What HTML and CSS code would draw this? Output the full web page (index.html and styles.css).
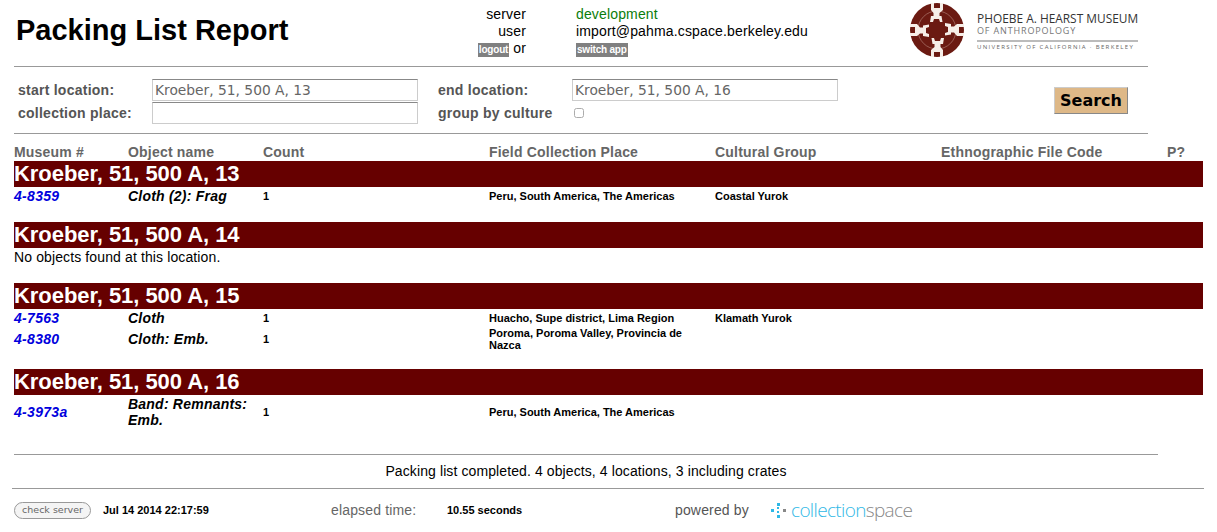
FILE: index.html
```html
<!DOCTYPE html>
<html lang="en">
<head>
  <meta charset="UTF-8">
  <meta name="viewport" content="width=device-width, initial-scale=1.0">
  <title>Packing List Report</title>
  <link rel="stylesheet" href="styles.css">
</head>
<body>
  <div class="top">
    <h1>Packing List Report</h1>
    <div class="session">
      <span class="key">server</span><span class="green">development</span>
      <span class="key">user</span><span>import@pahma.cspace.berkeley.edu</span>
      <span class="key"><a class="tag">logout</a> or</span><span><a class="tag">switch app</a></span>
    </div>
    <div class="logo">
      <svg width="56" height="56" viewBox="0 0 56 56">
        <circle cx="28" cy="28" r="27" fill="#6b1a12"/>
        <circle cx="28" cy="28" r="19" fill="none" stroke="#b98a80" stroke-width="0.6"/>
        <g id="fig">
          <path fill="#f6eee8" d="M22 1h3v5h6V1h3v7l-3.500 3v3h2l1 6h-2.500l-1-3h-5l-1 3H21l1-6h2.500v-3L22 8z"/>
        </g>
        <use href="#fig" transform="rotate(90 28 28)"/>
        <use href="#fig" transform="rotate(180 28 28)"/>
        <use href="#fig" transform="rotate(270 28 28)"/>
      </svg>
      <div class="logo-text">
        <div class="l1">PHOEBE A. HEARST MUSEUM</div>
        <div class="l2">OF ANTHROPOLOGY</div>
        <div class="l3">UNIVERSITY OF CALIFORNIA · BERKELEY</div>
      </div>
    </div>
  </div>
  <hr class="rule rule-top">

  <div class="search">
    <label>start location:</label>
    <input class="field" value="Kroeber, 51, 500 A, 13">
    <label>end location:</label>
    <input class="field" value="Kroeber, 51, 500 A, 16">
    <label>collection place:</label>
    <input class="field">
    <label>group by culture</label>
    <div><input class="check" type="checkbox"></div>
    <button class="go">Search</button>
  </div>
  <hr class="rule rule-form">

  <div class="row heads">
    <span>Museum #</span><span>Object name</span><span>Count</span><span>Field Collection Place</span><span>Cultural Group</span><span>Ethnographic File Code</span><span>P?</span>
  </div>

  <h2 class="band">Kroeber, 51, 500 A, 13</h2>
  <div class="row item">
    <a class="num">4-8359</a><i>Cloth (2): Frag</i><b>1</b><b>Peru, South America, The Americas</b><b>Coastal Yurok</b>
  </div>

  <h2 class="band gap-a">Kroeber, 51, 500 A, 14</h2>
  <p class="none">No objects found at this location.</p>

  <h2 class="band gap-b">Kroeber, 51, 500 A, 15</h2>
  <div class="row item">
    <a class="num">4-7563</a><i>Cloth</i><b>1</b><b>Huacho, Supe district, Lima Region</b><b>Klamath Yurok</b>
  </div>
  <div class="row item">
    <a class="num">4-8380</a><i>Cloth: Emb.</i><b>1</b><b>Poroma, Poroma Valley, Provincia de Nazca</b><b></b>
  </div>

  <h2 class="band gap-c">Kroeber, 51, 500 A, 16</h2>
  <div class="row item tall">
    <a class="num">4-3973a</a><i>Band: Remnants: Emb.</i><b>1</b><b>Peru, South America, The Americas</b><b></b>
  </div>

  <hr class="rule rule-end">
  <p class="done">Packing list completed. 4 objects, 4 locations, 3 including crates</p>
  <hr class="rule rule-foot">

  <div class="foot">
    <button class="check-server">check server</button>
    <b class="stamp">Jul 14 2014 22:17:59</b>
    <span class="elapsed">elapsed time:</span>
    <b class="secs">10.55 seconds</b>
    <span class="powered">powered by</span>
    <svg class="cs-dots" width="16" height="16" viewBox="0 0 16 16" fill="#2fb8e6">
      <rect x="0" y="7" width="3" height="3"/><rect x="6" y="1" width="3" height="3"/><rect x="6" y="5" width="2" height="2"/>
      <rect x="6" y="9" width="2" height="2"/><rect x="6" y="13" width="3" height="3"/><rect x="12" y="7" width="3" height="3" fill="#888"/>
    </svg>
    <span class="cs"><span class="cs-blue">collection</span>space</span>
  </div>
</body>
</html>
```

FILE: styles.css
```css
html, body { margin: 0; padding: 0; }
body { font-family: "Liberation Sans", Arial, sans-serif; background: #fff; color: #000; height: 532px; overflow: hidden; }

.top { display: flex; height: 66px; }
h1 { margin: 0; padding: 11px 0 0 16px; width: 430px; font-size: 29px; line-height: 38px; font-weight: bold; }
.session { display: grid; grid-template-columns: 80px auto; column-gap: 50px; margin: 6px 0 0 0; width: 460px; font-size: 14px; line-height: 17px; letter-spacing: 0.15px; align-content: start; }
.key { text-align: right; }
.green { color: #0a7d0a; }
.tag { display: inline-block; background: #808080; color: #fff; font-size: 10px; line-height: 14px; padding: 0 1px; font-weight: bold; letter-spacing: -0.2px; }
.logo { display: flex; margin: 2px 0 0 3px; }
.logo-text { margin-left: 12px; padding-top: 10px; width: 161px; }
.l1 { font-family: "Open Sans", sans-serif; font-size: 11.9px; line-height: 13px; color: #333; white-space: nowrap; }
.l2 { font-family: "Open Sans", sans-serif; font-size: 9px; line-height: 12px; color: #777; letter-spacing: 0.85px; white-space: nowrap; }
.l3 { font-family: "Open Sans", sans-serif; font-size: 6px; line-height: 9px; margin-top: 3px; padding-top: 1px; color: #666; letter-spacing: 1.35px; border-top: 2px solid #bbb; white-space: nowrap; }

.rule { border: 0; border-top: 1px solid #999; margin: 0; height: 1px; }
.rule-top { margin-left: 14px; width: 1134px; }
.rule-form { margin: 9px 0 0 14px; width: 1134px; }

.search { display: grid; grid-template-columns: 134px 286px 134px 286px 1fr; grid-auto-rows: 23px; margin: 10px 0 0 18px; width: 1130px; color: #555; font-size: 14px; font-weight: bold; letter-spacing: 0.25px; align-items: center; }
.search label { line-height: 20px; }
.field { box-sizing: border-box; width: 266px; height: 22px; border: 1px solid #ccc; border-top-color: #888; padding: 0 2px; font-family: "DejaVu Sans", sans-serif; font-size: 13.8px; color: #666; background: #fff; outline: 0; }
.check { margin: 0 0 0 2px; width: 10px; height: 10px; display: block; opacity: 0.6; }
.go { grid-column: 5; grid-row: 1 / span 2; justify-self: start; margin: 0 0 2px 196px; width: 74px; height: 27px; background: #deb887; border: 1px solid #888; border-color: #ccc #888 #888 #ccc; font-family: "DejaVu Sans", sans-serif; font-size: 16px; font-weight: bold; color: #000; padding: 0; }

.row { display: grid; grid-template-columns: 114px 135px 226px 226px 226px 226px 36px; margin-left: 14px; width: 1189px; }
.heads { margin-top: 9px; height: 17px; font-size: 14px; line-height: 17px; font-weight: bold; color: #666; letter-spacing: 0.2px; }
.band { margin: 0 0 0 14px; width: 1189px; height: 26px; background: #660000; color: #fff; font-size: 22px; line-height: 26px; font-weight: bold; letter-spacing: -0.05px; }
.gap-a { margin-top: 17px; }
.gap-b { margin-top: 16px; }
.gap-c { margin-top: 18px; }
.item { align-items: center; min-height: 18px; font-size: 11px; line-height: 12px; }
.item i { font-size: 14px; line-height: 16px; font-weight: bold; padding-right: 10px; letter-spacing: 0.22px; }
.item b { padding-right: 20px; }
.num { color: #0000dd; font-size: 14px; font-weight: bold; font-style: italic; letter-spacing: 0.3px; }
.tall { margin-top: 1px; }
.none { margin: 0; height: 19px; padding-left: 14px; font-size: 14px; line-height: 18px; letter-spacing: 0.12px; }

.rule-end { margin: 26px 0 0 14px; width: 1144px; }
.done { margin: 0; height: 32px; padding-left: 11px; text-align: center; width: 1150px; font-size: 14px; line-height: 31px; letter-spacing: 0.1px; }
.rule-foot { margin-left: 12px; width: 1192px; }

.foot { display: flex; align-items: center; height: 40px; font-size: 11px; }
.check-server { box-sizing: border-box; margin-left: 14px; width: 77px; height: 17px; padding: 0; border: 1px solid #999; border-radius: 9px; background: #f4f4f4; color: #666; font-family: "DejaVu Sans", sans-serif; font-size: 9.5px; line-height: 14px; }
.stamp { margin-left: 12px; width: 228px; }
.elapsed { width: 116px; color: #666; font-size: 14px; letter-spacing: 0.15px; }
.secs { width: 228px; }
.powered { width: 96px; color: #555; font-size: 14px; letter-spacing: 0.15px; }
.cs { margin-left: 4px; font-family: "Open Sans", sans-serif; font-size: 19px; color: #888; letter-spacing: -0.65px; font-weight: 300; }
.cs-blue { color: #2fb8e6; }
```
